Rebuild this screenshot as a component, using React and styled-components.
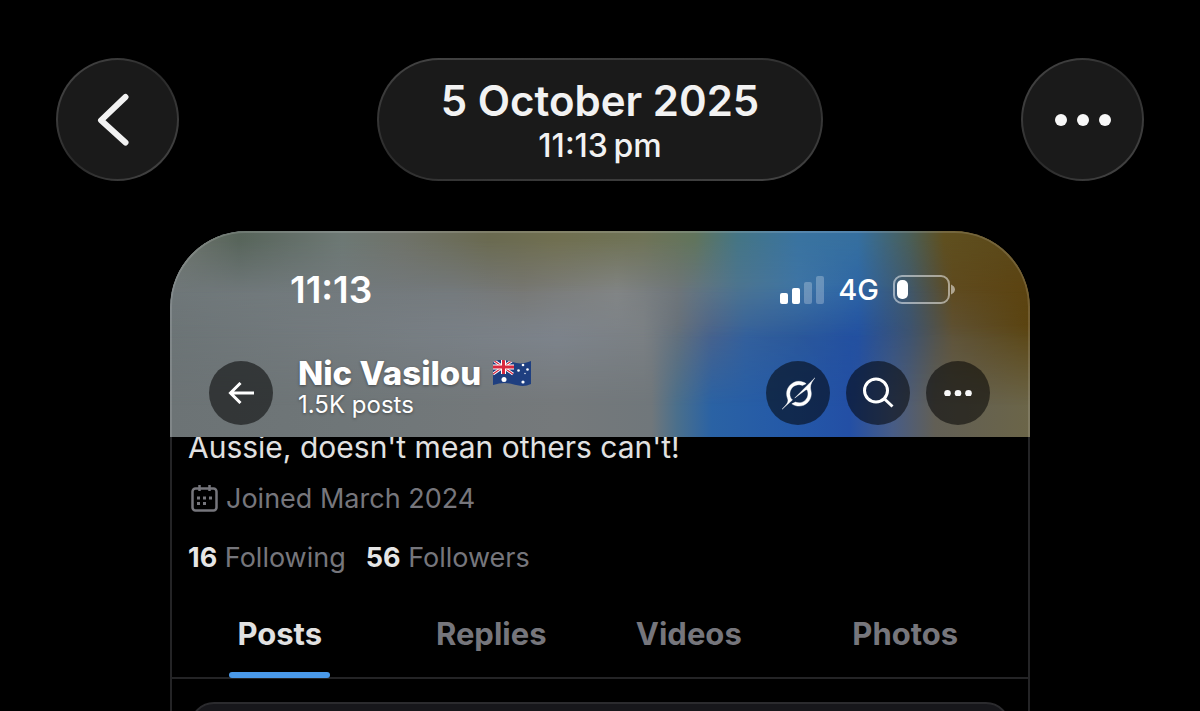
import React, { useState } from 'react'
import styled, { createGlobalStyle } from 'styled-components'

const GlobalStyle = createGlobalStyle`
  * {
    box-sizing: border-box;
  }
  body {
    margin: 0;
    background: #000;
    font-family: Inter, "Liberation Sans", sans-serif;
  }
  button {
    margin: 0;
    padding: 0;
    border: none;
    font: inherit;
    cursor: pointer;
  }
`

const Page = styled.div`
  height: 100vh;
  overflow: hidden;
  color: #fff;
`

const ViewerBar = styled.header`
  display: flex;
  justify-content: space-between;
  padding: 58px 56px 0;
`

const GlassButton = styled.button`
  display: flex;
  align-items: center;
  justify-content: center;
  width: 123px;
  height: 123px;
  border: 2px solid transparent;
  border-radius: 62px;
  background:
    linear-gradient(#1a1a1a, #1a1a1a) padding-box,
    linear-gradient(135deg, #4a4a4a, #2a2a2a 50%, #4a4a4a) border-box;
`

const DatePill = styled.div`
  display: flex;
  flex-direction: column;
  align-items: center;
  width: 446px;
  height: 123px;
  padding-top: 17px;
  border: 2px solid transparent;
  border-radius: 62px;
  background:
    linear-gradient(#1a1a1a, #1a1a1a) padding-box,
    linear-gradient(170deg, #444, #2c2c2c 50%, #444) border-box;
  color: #f2f2f2;
`

const DateText = styled.div`
  font-size: 42px;
  font-weight: 600;
  line-height: 48px;
`

const TimeText = styled.div`
  font-size: 32px;
  font-weight: 500;
  line-height: 42px;
`

const Phone = styled.main`
  width: calc(100% - 340px);
  margin: 50px auto 0;
  overflow: hidden;
  border-radius: 76px 76px 0 0;
`

const Banner = styled.section`
  position: relative;
  isolation: isolate;
  height: 206px;
  padding: 38px 40px 0 39px;
  border-radius: 76px 76px 0 0;
  overflow: hidden;
`

// one horizontal strip of the blurred cover photo, faded into the next by a mask
const BannerLayer = styled.div`
  position: absolute;
  inset: 0;
  z-index: -1;
  background: linear-gradient(90deg, ${p => p.$stops});
  mask-image: ${p => p.$mask || 'none'};
`

const BannerEdge = styled.div`
  position: absolute;
  inset: 0 0 -4px;
  z-index: -1;
  border: 2px solid rgba(255, 255, 255, 0.14);
  border-radius: 76px 76px 0 0;
`

const layers = [
  {
    stops: '#6c7375 0%, #6f7678 20%, #75797b 45%, #70777b 56%, #4a6f8c 59%, #2a62a4 63%, #2459a8 72%, #234fa5 79%, #475c86 84%, #625f55 89%, #6b6548 100%',
  },
  {
    stops: '#6c7476 0%, #757c80 20%, #7e858e 45%, #7c8185 55%, #66707a 59%, #4a628a 63%, #35609a 67%, #2c5898 73%, #2250a0 80%, #3b5270 86%, #5e5236 91%, #5a430f 100%',
    mask: 'linear-gradient(#000 45%, transparent 85%)',
  },
  {
    stops: '#6f7779 0%, #727a7d 15%, #74797c 33%, #777773 41%, #828585 52%, #6f767a 59%, #4e7590 66%, #3f75a5 73%, #2e66a6 80%, #41586a 86%, #5f4a1e 91%, #5c4310 100%',
    mask: 'linear-gradient(#000 26%, transparent 52%)',
  },
  {
    stops: '#70766f 0%, #57645a 8%, #6d7874 20%, #6f7269 27%, #6a6a50 37%, #706f50 45%, #6f7357 55%, #61745c 61%, #457585 66%, #3a73a0 73%, #356f9f 80%, #4a5e58 86%, #5f4f1f 90%, #5a4718 100%',
    mask: 'linear-gradient(#000 4%, transparent 30%)',
  },
]

const StatusBar = styled.div`
  display: flex;
  align-items: center;
  justify-content: space-between;
  height: 41px;
  padding: 0 34px 0 81px;
`

const Clock = styled.time`
  font-size: 37px;
  font-weight: 600;
  line-height: 40px;
`

const StatusIcons = styled.div`
  display: flex;
  align-items: center;
  gap: 14px;
  font-size: 29px;
  font-weight: 500;
`

const ProfileBar = styled.div`
  display: flex;
  align-items: flex-start;
  gap: 16px;
  margin-top: 51px;
`

const RoundButton = styled.button`
  display: flex;
  align-items: center;
  justify-content: center;
  width: 64px;
  height: 64px;
  border-radius: 32px;
  background: rgba(0, 0, 0, 0.53);
  color: #fff;
`

const Who = styled.div`
  flex: 1;
  margin: -8px 0 0 9px;
  text-shadow: 0 1px 3px rgba(0, 0, 0, 0.4);
`

const Name = styled.h1`
  display: flex;
  align-items: center;
  gap: 12px;
  margin: 0;
  font-size: 33px;
  font-weight: 800;
  line-height: 40px;
`

const PostCount = styled.div`
  font-size: 24px;
  line-height: 24px;
`

const Profile = styled.section`
  border: solid #242426;
  border-width: 0 2px;
  background: #000;
`

const Bio = styled.p`
  margin: 0;
  padding-left: 16px;
  margin-top: -8px;
  font-size: 30px;
  line-height: 36px;
  color: #e1e1e1;
`

// the bio is scrolled partly under the banner
const BioClip = styled.div`
  overflow: hidden;
`

const Joined = styled.div`
  display: flex;
  align-items: center;
  gap: 8px;
  margin-top: 16px;
  padding-left: 19px;
  font-size: 27px;
  line-height: 36px;
  color: #76767c;
`

const Follows = styled.div`
  display: flex;
  gap: 20px;
  margin-top: 23px;
  padding-left: 16px;
  font-size: 27px;
  line-height: 36px;
  a {
    color: #76767c;
    text-decoration: none;
  }
  strong {
    color: #e6e6e6;
    font-weight: 700;
  }
`

const Tabs = styled.nav`
  display: grid;
  grid-template-columns: 216fr 208fr 188fr 246fr;
  margin-top: 33px;
  border-bottom: 2px solid #242426;
`

const Tab = styled.button`
  display: flex;
  justify-content: center;
  background: none;
  font-size: 31px;
  font-weight: 700;
  line-height: 50px;
  color: ${p => (p.$active ? '#e1e1e1' : '#76767c')};
  span {
    position: relative;
    padding: 0 8px 18px;
  }
  span::after {
    content: '';
    position: absolute;
    left: 0;
    right: 0;
    bottom: -1px;
    height: 6px;
    border-radius: 3px;
    background: ${p => (p.$active ? '#4a99e9' : 'transparent')};
  }
`

const PostCard = styled.article`
  min-height: 120px;
  margin: 23px 18px 0;
  border: 2px solid #2b2b2e;
  border-radius: 24px;
  background: #17171b;
`

const BackChevron = styled.svg`
  margin-right: 8px;
`

const ChevronIcon = () => (
  <BackChevron width="34" height="54" viewBox="0 0 34 54" fill="none" stroke="#f2f2f2" strokeWidth="6" strokeLinecap="round" strokeLinejoin="round">
    <path d="M28.500 4 4 27.300 28.500 49.500" />
  </BackChevron>
)

const DotsIcon = ({ width, r, gap }) => (
  <svg width={width} height={r * 2} viewBox={`${-width / 2} ${-r} ${width} ${r * 2}`} fill="#f8f8f8">
    <circle cx={-gap} r={r} />
    <circle r={r} />
    <circle cx={gap} r={r} />
  </svg>
)

const SignalIcon = () => (
  <svg width="44" height="28" viewBox="0 0 44 28" fill="#fff">
    <rect x="0" y="17" width="8" height="11" rx="2" />
    <rect x="12" y="12" width="8" height="16" rx="2" />
    <rect x="24" y="6" width="8" height="22" rx="2" opacity="0.25" />
    <rect x="36" y="0" width="8" height="28" rx="2" opacity="0.25" />
  </svg>
)

const BatteryIcon = () => (
  <svg width="63" height="30" viewBox="0 0 63 30">
    <rect x="1" y="1" width="55" height="27" rx="8" fill="none" stroke="#fff" strokeOpacity="0.5" strokeWidth="2" />
    <rect x="4" y="5" width="11" height="19" rx="5" fill="#fff" />
    <path d="M58 9.500c2.400 1 4 2.800 4 5s-1.600 4-4 5z" fill="#fff" fillOpacity="0.5" />
  </svg>
)

const ArrowIcon = () => (
  <svg width="26" height="22" viewBox="0 0 26 22" fill="none" stroke="#fff" strokeWidth="3">
    <path d="M26 11H2.500M12.500 1 2.500 11l10 10" />
  </svg>
)

const GrokIcon = () => (
  <svg width="33" height="33" viewBox="0 0 24 24" fill="#fff" stroke="#fff" strokeWidth="0.3">
    <path d="M9.270 15.290l7.978-5.897c.391-.29.950-.177 1.137.272.980 2.369.542 5.215-1.410 7.169-1.951 1.954-4.667 2.382-7.149 1.406l-2.711 1.257c3.889 2.661 8.611 2.003 11.562-.953 2.341-2.344 3.066-5.539 2.388-8.420l.006.007c-.983-4.232.242-5.924 2.750-9.383l.179-.248-3.301 3.305v-.010L9.267 15.292M7.623 16.723c-2.792-2.670-2.310-6.801.071-9.184 1.761-1.763 4.647-2.483 7.166-1.425l2.705-1.250a7.808 7.808 0 0 0-1.829-1A8.975 8.975 0 0 0 5.984 5.830c-2.533 2.536-3.330 6.436-1.962 9.764 1.022 2.487-.653 4.246-2.340 6.022-.599.630-1.199 1.259-1.682 1.925l7.620-6.815" />
  </svg>
)

const SearchIcon = () => (
  <svg width="32" height="32" viewBox="0 0 32 32" fill="none" stroke="#fff" strokeWidth="3">
    <circle cx="14" cy="13.500" r="11.500" />
    <path d="M22 21.500l8.500 8" />
  </svg>
)

const CalendarIcon = () => (
  <svg width="27" height="28" viewBox="0 0 27 28" fill="none" stroke="#76767c" strokeWidth="2.500">
    <rect x="1.500" y="3.500" width="24" height="22" rx="3" />
    <path d="M8.500 0v6M18.500 0v6" />
    <path d="M6 13h3M12 13h3M18 13h3M6 18.500h3M12 18.500h3" strokeWidth="3" />
  </svg>
)

const FlagIcon = () => (
  <svg width="38" height="28" viewBox="0 0 38 28">
    <clipPath id="wave">
      <path d="M0 3c6-3 12-2 19 0s12 2 19-1v23c-6 3-12 2-19 0s-12-1-19 1z" />
    </clipPath>
    <g clipPath="url(#wave)">
      <path d="M0 0h38v28H0z" fill="#1f3f80" />
      <path d="M0 1l20 14M20 1L0 15" stroke="#fff" strokeWidth="3" />
      <path d="M0 1l20 14M20 1L0 15" stroke="#d8283f" strokeWidth="1.200" />
      <path d="M10.500 0v15M0 8h21" stroke="#fff" strokeWidth="5" />
      <path d="M10.500 0v15M0 8h21" stroke="#d8283f" strokeWidth="3" />
      <g fill="#fff">
        <circle cx="11" cy="20.500" r="2.500" />
        <circle cx="30" cy="6" r="1.300" />
        <circle cx="25.500" cy="11.500" r="1.300" />
        <circle cx="34.500" cy="10.500" r="1.300" />
        <circle cx="30" cy="23" r="1.600" />
        <circle cx="32" cy="14.500" r="0.700" />
      </g>
    </g>
  </svg>
)

const tabs = ['Posts', 'Replies', 'Videos', 'Photos']

const App = () => {
  const [active, setActive] = useState('Posts')

  return (
    <Page>
      <GlobalStyle />
      <ViewerBar>
        <GlassButton aria-label="Back to library">
          <ChevronIcon />
        </GlassButton>
        <DatePill>
          <DateText>5 October 2025</DateText>
          <TimeText>11:13&#8201;pm</TimeText>
        </DatePill>
        <GlassButton aria-label="Photo options">
          <DotsIcon width={56} r={6} gap={22} />
        </GlassButton>
      </ViewerBar>
      <Phone>
        <Banner>
          {layers.map((layer, i) => (
            <BannerLayer key={i} $stops={layer.stops} $mask={layer.mask} />
          ))}
          <BannerEdge />
          <StatusBar>
            <Clock>11:13</Clock>
            <StatusIcons>
              <SignalIcon />
              <span>4G</span>
              <BatteryIcon />
            </StatusIcons>
          </StatusBar>
          <ProfileBar>
            <RoundButton aria-label="Back">
              <ArrowIcon />
            </RoundButton>
            <Who>
              <Name>
                Nic Vasilou <FlagIcon />
              </Name>
              <PostCount>1.5K posts</PostCount>
            </Who>
            <RoundButton aria-label="Grok">
              <GrokIcon />
            </RoundButton>
            <RoundButton aria-label="Search">
              <SearchIcon />
            </RoundButton>
            <RoundButton aria-label="More">
              <DotsIcon width={28} r={3.3} gap={10.5} />
            </RoundButton>
          </ProfileBar>
        </Banner>
        <Profile>
          <BioClip>
            <Bio>Aussie, doesn't mean others can't!</Bio>
          </BioClip>
          <Joined>
            <CalendarIcon /> Joined March 2024
          </Joined>
          <Follows>
            <a href="#following"><strong>16</strong> Following</a>
            <a href="#followers"><strong>56</strong> Followers</a>
          </Follows>
          <Tabs>
            {tabs.map(tab => (
              <Tab key={tab} $active={tab === active} onClick={() => setActive(tab)}>
                <span>{tab}</span>
              </Tab>
            ))}
          </Tabs>
          <PostCard />
        </Profile>
      </Phone>
    </Page>
  )
}

export default App
